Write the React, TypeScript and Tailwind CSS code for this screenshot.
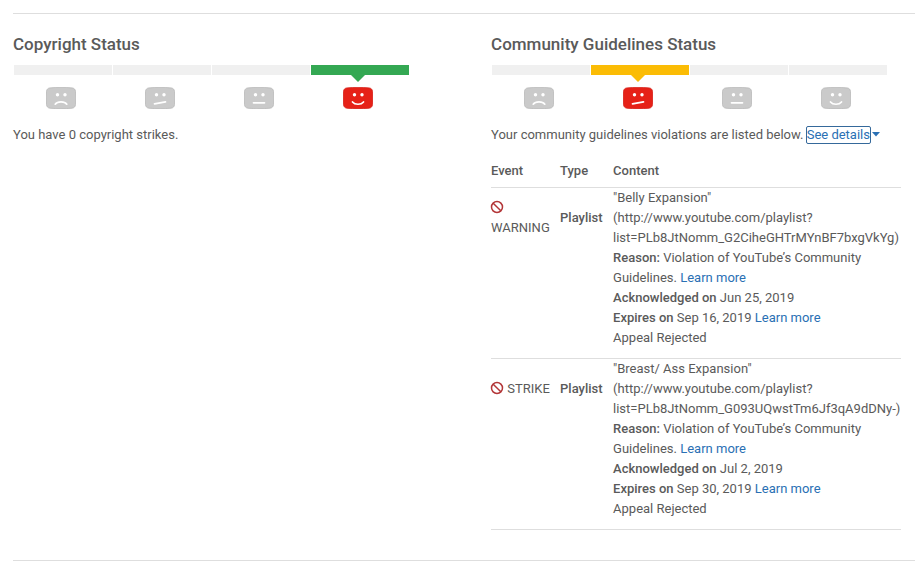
import React from "react";

type Mood = "sad" | "uneasy" | "neutral" | "happy";

const moods: Mood[] = ["sad", "uneasy", "neutral", "happy"];

const mouths: Record<Mood, string> = {
  sad: "M9.2 17.2C11.5 14.2 18.5 14.2 20.8 17.2",
  uneasy: "M9.5 16.8L20.5 14.8",
  neutral: "M9.5 15.8H20.5",
  happy: "M9.5 15C11.8 18 18.2 18 20.5 15",
};

function Face({ mood, active }: { mood: Mood; active: boolean }) {
  return (
    <svg width="30" height="22" viewBox="0 0 30 22" role="img" aria-label={mood}>
      <path
        d="M4 .9C10 .2 20 .2 26 .9C28.2 1.2 29.2 2.2 29.5 4.4C29.9 8.5 29.9 13.5 29.5 17.6C29.2 19.8 28.2 20.9 26 21.2C20 21.8 10 21.8 4 21.2C1.8 20.9.8 19.8.5 17.6C.1 13.5.1 8.5.5 4.4C.8 2.2 1.8 1.2 4 .9Z"
        fill={active ? "#e62117" : "#cacaca"}
        stroke={active ? "#d61f18" : "#b8b8b8"}
        strokeWidth=".8"
      />
      <circle cx="11.5" cy="7.7" r="1.7" fill="#fff" />
      <circle cx="19" cy="7.7" r="1.7" fill="#fff" />
      <path d={mouths[mood]} stroke="#fff" strokeWidth="1.7" fill="none" strokeLinecap="round" />
    </svg>
  );
}

function Meter({ level, tone }: { level: Mood; tone: "green" | "amber" }) {
  return (
    <div className="ml-px w-[395px]">
      <div className="grid h-[10px] grid-cols-4 gap-px">
        {moods.map((m) => (
          <div
            key={m}
            className={m !== level ? "bg-[#f0f0f0]" : tone === "green" ? "bg-[#34a853]" : "bg-[#fbbc05]"}
          />
        ))}
      </div>
      <div className="flex gap-[69px] pl-8">
        {moods.map((m) => (
          <div key={m} className="flex flex-col items-center">
            <svg width="14" height="12" viewBox="0 0 14 12" aria-hidden="true">
              {m === level && <path d="M0 0H14L7 7Z" fill={tone === "green" ? "#34a853" : "#fbbc05"} />}
            </svg>
            <Face mood={m} active={m === level} />
          </div>
        ))}
      </div>
    </div>
  );
}

function Ban() {
  return (
    <svg className="-ml-px inline-block align-[-2px]" width="14" height="14" viewBox="0 0 14 14" aria-hidden="true">
      <circle cx="7" cy="7" r="5.5" fill="none" stroke="#b33638" strokeWidth="1.5" />
      <path d="M3.2 3.2L10.8 10.8" stroke="#b33638" strokeWidth="1.5" />
    </svg>
  );
}

const rows = [
  {
    event: "WARNING",
    title: '"Belly Expansion"',
    list: "list=PLb8JtNomm_G2CiheGHTrMYnBF7bxgVkYg)",
    acknowledged: "Jun 25, 2019",
    expires: "Sep 16, 2019",
  },
  {
    event: "STRIKE",
    title: '"Breast/ Ass Expansion"',
    list: "list=PLb8JtNomm_G093UQwstTm6Jf3qA9dDNy-)",
    acknowledged: "Jul 2, 2019",
    expires: "Sep 30, 2019",
  },
];

function LearnMore() {
  return (
    <a href="#learn-more" className="text-[#2a70b4]">
      Learn more
    </a>
  );
}

export default function App() {
  return (
    <div className="bg-white pt-[13px] pl-[13px] font-[Roboto,'Liberation_Sans',sans-serif] text-[13px] leading-5 text-[#5a5a5a]">
      <main className="grid grid-cols-[53fr_47fr] border-y border-[#dedede] pt-5 pb-[30px]">
        <section>
          <h2 className="mb-[11px] text-[17px] leading-5 font-medium">Copyright Status</h2>
          <Meter level="happy" tone="green" />
          <p className="mt-4">You have 0 copyright strikes.</p>
        </section>
        <section className="pr-[14px]">
          <h2 className="mb-[11px] text-[17px] leading-5 font-medium">Community Guidelines Status</h2>
          <Meter level="uneasy" tone="amber" />
          <p className="mt-4 whitespace-nowrap">
            Your community guidelines violations are listed below.{" "}
            <button
              type="button"
              className="rounded-[1px] text-[#2a70b4] leading-4 outline outline-[#35699b]"
            >
              See details
            </button>
            <svg className="ml-[2px] inline-block align-[2px]" width="8" height="5" viewBox="0 0 8 5" aria-hidden="true">
              <path d="M0 0H8L4 4.5Z" fill="#2a70b4" />
            </svg>
          </p>
          <table className="mt-4 w-full border-collapse text-left">
            <thead>
              <tr className="border-b border-[#dedede]">
                <th className="w-[69px] pb-[6px] font-medium">Event</th>
                <th className="w-[53px] pb-[6px] font-medium">Type</th>
                <th className="pb-[6px] font-medium">Content</th>
              </tr>
            </thead>
            <tbody>
              {rows.map((r) => (
                <tr key={r.event} className="border-b border-[#dedede] align-top">
                  <td className={r.event === "WARNING" ? "pt-[10px] pr-2" : "pt-5 pr-2"}>
                    <Ban /> {r.event}
                  </td>
                  <td className="pt-5 font-medium">Playlist</td>
                  <td className="pb-[10px] whitespace-nowrap">
                    {r.title}
                    <br />
                    (http://www.youtube.com/playlist?
                    <br />
                    {r.list}
                    <br />
                    <b className="font-medium">Reason:</b> Violation of YouTube’s Community
                    <br />
                    Guidelines. <LearnMore />
                    <br />
                    <b className="font-medium">Acknowledged on</b> {r.acknowledged}
                    <br />
                    <b className="font-medium">Expires on</b> {r.expires} <LearnMore />
                    <br />
                    Appeal Rejected
                  </td>
                </tr>
              ))}
            </tbody>
          </table>
        </section>
      </main>
    </div>
  );
}
